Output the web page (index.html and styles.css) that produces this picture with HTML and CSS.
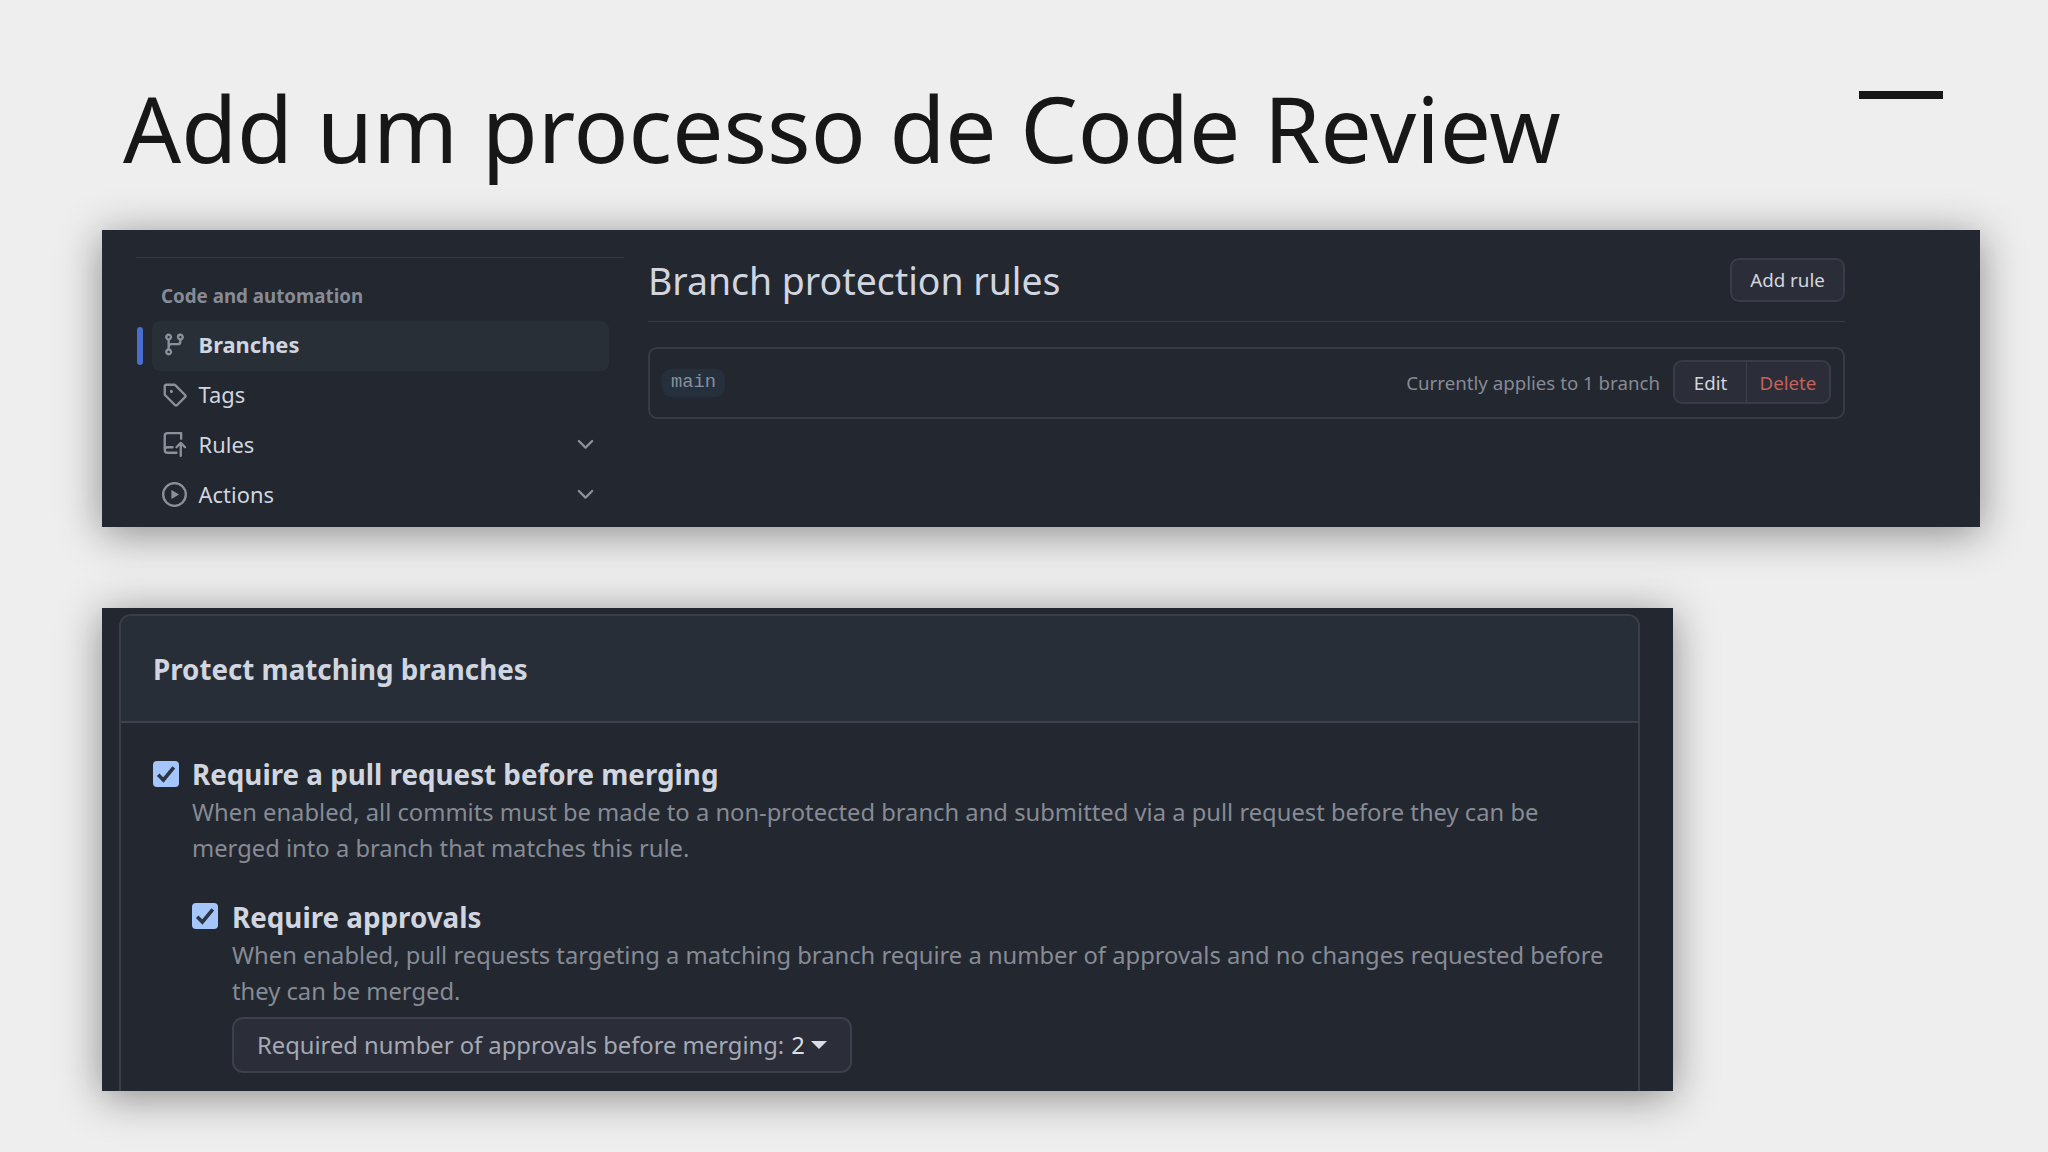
FILE: index.html
```html
<!DOCTYPE html>
<html lang="pt-BR" dir="ltr">
    <head>
        <meta charset="utf-8">
        <meta name="viewport" content="width=device-width, initial-scale=1.0" />
        <title>Add um processo de Code Review</title>
        <link rel="stylesheet" href="styles.css">
    </head>
    <body>
        <header>
            <h1>Add um processo de Code Review</h1>
            <div class="dash"></div>
        </header>
        <main>
            <section class="panel settings">
                <nav>
                    <h3>Code and automation</h3>
                    <ul>
                        <li class="selected">
                            <svg class="icon" viewBox="0 0 16 16"><path d="M9.5 3.25a2.25 2.25 0 1 1 3 2.122V6A2.5 2.5 0 0 1 10 8.5H6a1 1 0 0 0-1 1v1.128a2.251 2.251 0 1 1-1.5 0V5.372a2.25 2.25 0 1 1 1.5 0v1.836A2.493 2.493 0 0 1 6 7h4a1 1 0 0 0 1-1v-.628A2.25 2.25 0 0 1 9.5 3.25Zm-6 0a.75.75 0 1 0 1.5 0 .75.75 0 0 0-1.5 0Zm8.25-.75a.75.75 0 1 0 0 1.5.75.75 0 0 0 0-1.5ZM4.25 12a.75.75 0 1 0 0 1.5.75.75 0 0 0 0-1.5Z"/></svg>
                            <span>Branches</span>
                        </li>
                        <li>
                            <svg class="icon" viewBox="0 0 16 16"><path d="M1 7.775V2.75C1 1.784 1.784 1 2.75 1h5.025c.464 0 .91.184 1.238.513l6.25 6.25a1.75 1.75 0 0 1 0 2.474l-5.026 5.026a1.75 1.75 0 0 1-2.474 0l-6.25-6.25A1.752 1.752 0 0 1 1 7.775Zm1.5 0c0 .066.026.13.073.177l6.25 6.25a.25.25 0 0 0 .354 0l5.025-5.025a.25.25 0 0 0 0-.354l-6.25-6.25a.25.25 0 0 0-.177-.073H2.75a.25.25 0 0 0-.25.25ZM6 5a1 1 0 1 1 0 2 1 1 0 0 1 0-2Z"/></svg>
                            <span>Tags</span>
                        </li>
                        <li>
                            <svg class="icon" viewBox="0 0 16 16"><path d="M1 2.5A2.5 2.5 0 0 1 3.5 0h8.75a.75.75 0 0 1 .75.75v3.5a.75.75 0 0 1-1.5 0V1.5h-8a1 1 0 0 0-1 1v6.708A2.493 2.493 0 0 1 3.5 9h3.25a.75.75 0 0 1 0 1.5H3.5a1 1 0 0 0 0 2h5.75a.75.75 0 0 1 0 1.5H3.5A2.5 2.5 0 0 1 1 11.5Zm13.23 7.79-1.48-1.479v6.439a.75.75 0 0 1-1.5 0V8.811L9.77 10.29a.75.75 0 0 1-1.06-1.06l2.76-2.76a.75.75 0 0 1 1.06 0l2.76 2.76a.75.75 0 0 1-1.06 1.06Z"/></svg>
                            <span>Rules</span>
                            <svg class="icon chevron" viewBox="0 0 16 16"><path d="M12.78 5.22a.749.749 0 0 1 0 1.06l-4.25 4.25a.749.749 0 0 1-1.06 0L3.22 6.28a.749.749 0 1 1 1.06-1.06L8 8.939l3.72-3.719a.749.749 0 0 1 1.06 0Z"/></svg>
                        </li>
                        <li>
                            <svg class="icon" viewBox="0 0 16 16"><path d="M8 0a8 8 0 1 1 0 16A8 8 0 0 1 8 0ZM1.5 8a6.5 6.5 0 1 0 13 0 6.5 6.5 0 0 0-13 0Zm4.879-2.773 4.264 2.559a.25.25 0 0 1 0 .428l-4.264 2.559A.25.25 0 0 1 6 10.559V5.442a.25.25 0 0 1 .379-.215Z"/></svg>
                            <span>Actions</span>
                            <svg class="icon chevron" viewBox="0 0 16 16"><path d="M12.78 5.22a.749.749 0 0 1 0 1.06l-4.25 4.25a.749.749 0 0 1-1.06 0L3.22 6.28a.749.749 0 1 1 1.06-1.06L8 8.939l3.72-3.719a.749.749 0 0 1 1.06 0Z"/></svg>
                        </li>
                    </ul>
                </nav>
                <div class="rules">
                    <div class="subhead">
                        <h2>Branch protection rules</h2>
                        <button class="btn">Add rule</button>
                    </div>
                    <div class="rule">
                        <code>main</code>
                        <span class="applies">Currently applies to 1 branch</span>
                        <div class="group">
                            <button>Edit</button>
                            <button class="danger">Delete</button>
                        </div>
                    </div>
                </div>
            </section>

            <section class="panel protect">
                <div class="box">
                    <h3 class="box-header">Protect matching branches</h3>
                    <div class="option">
                        <span class="check"><svg viewBox="0 0 13 13"><path d="M2.6 6.9 5.2 9.5 10.4 3.2"/></svg></span>
                        <div>
                            <h4>Require a pull request before merging</h4>
                            <p>When enabled, all commits must be made to a non-protected branch and submitted via a pull request before they can be<br>merged into a branch that matches this rule.</p>
                        </div>
                    </div>
                    <div class="option nested">
                        <span class="check"><svg viewBox="0 0 13 13"><path d="M2.6 6.9 5.2 9.5 10.4 3.2"/></svg></span>
                        <div>
                            <h4>Require approvals</h4>
                            <p>When enabled, pull requests targeting a matching branch require a number of approvals and no changes requested before<br>they can be merged.</p>
                            <button class="select">Required number of approvals before merging: <b>2</b><i class="caret"></i></button>
                        </div>
                    </div>
                </div>
            </section>
        </main>
    </body>
</html>
```
FILE: styles.css
```css
* {
    box-sizing: border-box;
}
body {
    margin: 0;
    height: 1152px;
    overflow: hidden;
    background: #eee;
    color: #d1d5df;
    font-family: "Noto Sans", sans-serif;
}
h1, h2, h3, h4, p, ul {
    margin: 0;
    padding: 0;
}
button {
    font: inherit;
    color: inherit;
    padding: 0;
}
header {
    display: flex;
    justify-content: space-between;
    height: 229.5px;
    padding: 68px 105px 0 123px;
}
h1 {
    font-size: 91px;
    font-weight: 400;
    line-height: 120px;
    color: #171717;
}
.dash {
    width: 84px;
    height: 8px;
    margin-top: 23px;
    background: #171717;
}
main {
    padding-left: 102px;
}
.panel {
    background: #23272f;
    box-shadow: 0 6px 40px rgba(0, 0, 0, .42);
    overflow: hidden;
}

/* branch settings */
.settings {
    display: flex;
    width: 1878px;
    height: 297px;
}
nav {
    width: 488px;
    margin: 27px 0 0 34px;
    border-top: 1px solid #333842;
}
nav h3 {
    padding: 23px 0 0 25px;
    font-size: 18.75px;
    line-height: 30px;
    color: #868b95;
}
nav ul {
    margin: 10px 0 0 16px;
    width: 457px;
    list-style: none;
}
nav li {
    position: relative;
    display: flex;
    align-items: center;
    height: 50px;
    padding: 0 11px 2px 10px;
    font-size: 21.9px;
}
nav li.selected {
    font-weight: 700;
    background: #282f37;
    border-radius: 8px;
}
nav li.selected:before {
    content: "";
    position: absolute;
    left: -15px;
    top: 6px;
    width: 6px;
    height: 38px;
    border-radius: 3px;
    background: #4b6dcb;
}
.icon {
    width: 25px;
    height: 25px;
    margin-right: 11.6px;
    fill: #8b909b;
}
.chevron {
    margin: 0 0 0 auto;
}
.rules {
    width: 1197px;
    margin-left: 24px;
}
.subhead {
    display: flex;
    justify-content: space-between;
    align-items: flex-start;
    height: 92px;
    padding-top: 28px;
    border-bottom: 1px solid #373b44;
}
h2 {
    font-size: 37.4px;
    font-weight: 400;
    line-height: 45px;
}
.btn {
    width: 115px;
    height: 44px;
    padding-bottom: 1px;
    font-size: 18.75px;
    background: #2b2e39;
    border: 2px solid #393c47;
    border-radius: 9px;
}
.rule {
    display: flex;
    align-items: center;
    height: 72px;
    margin-top: 25px;
    padding: 0 12px 1px;
    border: 2px solid #373b44;
    border-radius: 9px;
    font-size: 18.7px;
}
code {
    height: 28px;
    margin-top: 2px;
    padding: 0 9px;
    font: 18.75px/26px "Liberation Mono", monospace;
    color: #858f9c;
    background: #262f3c;
    border-radius: 9px;
}
.applies {
    margin-left: auto;
    color: #868b95;
}
.group {
    display: flex;
    height: 44px;
    margin-left: 13px;
    background: #2b2e39;
    border: 2px solid #393c47;
    border-radius: 9px;
}
.group button {
    width: 71px;
    background: none;
    border: 0;
}
.group .danger {
    width: 83px;
    color: #c5625a;
    border-left: 1px solid #3d404b;
}

/* protection options */
.protect {
    width: 1571px;
    height: 482.5px;
    margin-top: 81.5px;
    padding: 6px 33px 0 17px;
}
.box {
    height: 520px;
    border: 2px solid #3a3e48;
    border-radius: 12px;
}
.box-header {
    height: 107px;
    padding-left: 32px;
    font-size: 27.75px;
    line-height: 107px;
    background: #282e37;
    border-bottom: 2px solid #3f424d;
    border-radius: 10px 10px 0 0;
}
.option {
    display: flex;
    padding: 32px 0 0 32px;
}
.nested {
    padding: 32px 0 0 71px;
}
.check {
    flex: none;
    width: 26px;
    height: 26px;
    margin: 6px 13px 0 0;
    background: #a5c6fb;
    border-radius: 4px;
}
.nested .check {
    margin-top: 5px;
    margin-right: 14px;
}
.check svg {
    display: block;
    fill: none;
    stroke: #2d3543;
    stroke-width: 1.8;
}
h4 {
    font-size: 27.77px;
    line-height: 38px;
}
p {
    margin-top: 2px;
    font-size: 23.76px;
    line-height: 35.5px;
    color: #868b95;
    white-space: nowrap;
}
.select {
    display: flex;
    align-items: center;
    width: 620px;
    height: 56px;
    margin-top: 8px;
    padding-left: 23px;
    font-size: 23.76px;
    color: #a5a9b4;
    background: #2b2e39;
    border: 2px solid #3c404a;
    border-radius: 11px;
}
.select b {
    margin-left: 7px;
    font-weight: 400;
    color: #d9dde6;
}
.caret {
    margin-left: 6px;
    border: 8px solid transparent;
    border-top-color: #d9dde6;
    border-bottom: 0;
}
```
